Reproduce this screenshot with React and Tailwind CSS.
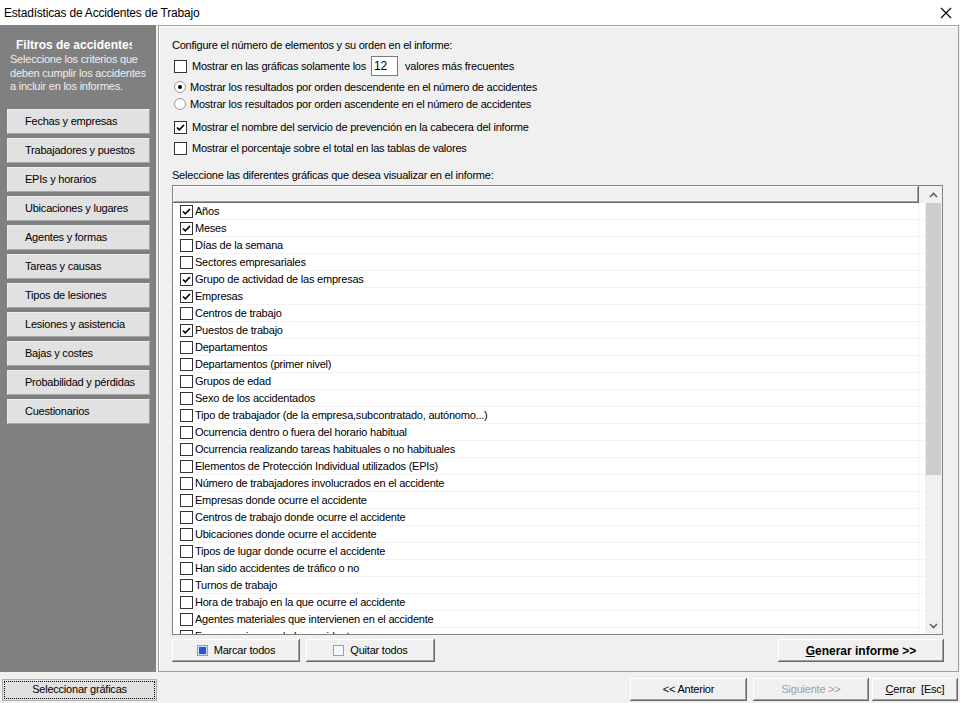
import React from "react";

const filtros = [
  "Fechas y empresas",
  "Trabajadores y puestos",
  "EPIs y horarios",
  "Ubicaciones y lugares",
  "Agentes y formas",
  "Tareas y causas",
  "Tipos de lesiones",
  "Lesiones y asistencia",
  "Bajas y costes",
  "Probabilidad y pérdidas",
  "Cuestionarios",
];

const graficas = [
  ["Años", true],
  ["Meses", true],
  ["Días de la semana", false],
  ["Sectores empresariales", false],
  ["Grupo de actividad de las empresas", true],
  ["Empresas", true],
  ["Centros de trabajo", false],
  ["Puestos de trabajo", true],
  ["Departamentos", false],
  ["Departamentos (primer nivel)", false],
  ["Grupos de edad", false],
  ["Sexo de los accidentados", false],
  ["Tipo de trabajador (de la empresa,subcontratado, autónomo...)", false],
  ["Ocurrencia dentro o fuera del horario habitual", false],
  ["Ocurrencia realizando tareas habituales o no habituales", false],
  ["Elementos de Protección Individual utilizados (EPIs)", false],
  ["Número de trabajadores involucrados en el accidente", false],
  ["Empresas donde ocurre el accidente", false],
  ["Centros de trabajo donde ocurre el accidente", false],
  ["Ubicaciones donde ocurre el accidente", false],
  ["Tipos de lugar donde ocurre el accidente", false],
  ["Han sido accidentes de tráfico o no", false],
  ["Turnos de trabajo", false],
  ["Hora de trabajo en la que ocurre el accidente", false],
  ["Agentes materiales que intervienen en el accidente", false],
  ["Formas o riesgos de los accidentes", false],
];

function Check({ checked }) {
  return (
    <span className="w-[13px] h-[13px] shrink-0 border border-[#333] bg-white flex items-center justify-center">
      {checked && (
        <svg width="11" height="11" viewBox="0 0 11 11">
          <path d="M2 5.5 L4.3 7.8 L9 3" fill="none" stroke="#000" strokeWidth="1.7" />
        </svg>
      )}
    </span>
  );
}

function Radio({ checked }) {
  return (
    <span className="w-[12px] h-[12px] shrink-0 rounded-full border border-[#9a9a9a] bg-white flex items-center justify-center">
      {checked && <span className="w-[4px] h-[4px] rounded-full bg-black" />}
    </span>
  );
}

function Button3D({ className = "", children }) {
  return (
    <div
      className={
        "flex items-center justify-center bg-[#f0f0f0] shadow-[inset_-1px_-1px_#696969,inset_1px_1px_#ffffff,inset_-2px_-2px_#a0a0a0] " +
        className
      }
    >
      {children}
    </div>
  );
}

export default function App() {
  return (
    <div className="w-[960px] h-[703px] bg-[#f0f0f0] flex flex-col overflow-hidden font-['Liberation_Sans',Arial,sans-serif] text-[11px] tracking-[-0.22px] text-black">
      {/* title bar */}
      <div className="h-[25px] bg-white flex items-center justify-between pl-[4px] pr-[8px]">
        <span className="text-[12px] tracking-[-0.2px]">Estadísticas de Accidentes de Trabajo</span>
        <svg width="12" height="12" viewBox="0 0 12 12">
          <path d="M1 1 L11 11 M11 1 L1 11" stroke="#000" strokeWidth="1.1" />
        </svg>
      </div>

      {/* body */}
      <div className="h-[647px] flex">
        {/* left filter panel */}
        <div className="w-[156px] bg-[#808080] flex flex-col pt-[13px]">
          <div className="ml-[16px] w-[116px] overflow-hidden whitespace-nowrap text-white font-bold text-[12px] leading-[14px] tracking-[0px]">
            Filtros de accidentes
          </div>
          <div className="ml-[10px] mt-[1px] text-[#eeeeee] leading-[13.5px]">
            Seleccione los criterios que
            <br />
            deben cumplir los accidentes
            <br />
            a incluir en los informes.
          </div>
          <div className="mt-[15px] ml-[7px] w-[143px] flex flex-col gap-[4px]">
            {filtros.map((f) => (
              <div
                key={f}
                className="h-[25px] bg-[#e1e1e1] border-t border-l border-[#ececec] border-b border-r border-b-[#a5a5a5] border-r-[#a5a5a5] flex items-center pl-[17px]"
              >
                {f}
              </div>
            ))}
          </div>
        </div>

        {/* right panel */}
        <div className="ml-[2px] w-[801px] border border-[#a0a0a0] shadow-[inset_1px_1px_#ffffff] flex flex-col pl-[13px] pt-[12px]">
          <div className="h-[14px] flex items-center">Configure el número de elementos y su orden en el informe:</div>
          <div className="mt-[4px] h-[20px] flex items-center pl-[2px]">
            <Check />
            <span className="ml-[5px]">Mostrar en las gráficas solamente los</span>
            <span className="ml-[5px] w-[27px] h-[20px] bg-white border border-[#7a7a7a] flex items-center pl-[2px] text-[12px]">12</span>
            <span className="ml-[7px]">valores más frecuentes</span>
          </div>
          <div className="mt-[4px] h-[14px] flex items-center pl-[2px]">
            <Radio checked />
            <span className="ml-[4px]">Mostrar los resultados por orden descendente en el número de accidentes</span>
          </div>
          <div className="mt-[3px] h-[14px] flex items-center pl-[2px]">
            <Radio />
            <span className="ml-[4px]">Mostrar los resultados por orden ascendente en el número de accidentes</span>
          </div>
          <div className="mt-[9px] h-[14px] flex items-center pl-[2px]">
            <Check checked />
            <span className="ml-[5px]">Mostrar el nombre del servicio de prevención en la cabecera del informe</span>
          </div>
          <div className="mt-[7px] h-[14px] flex items-center pl-[2px]">
            <Check />
            <span className="ml-[5px]">Mostrar el porcentaje sobre el total en las tablas de valores</span>
          </div>
          <div className="mt-[13px] h-[14px] flex items-center">Seleccione las diferentes gráficas que desea visualizar en el informe:</div>

          {/* list */}
          <div className="mt-[3px] w-[771px] h-[450px] border border-[#828282] bg-white flex overflow-hidden">
            <div className="flex-1 flex flex-col overflow-hidden">
              <div className="h-[17px] shrink-0 bg-[#f0f0f0] flex">
                <div className="w-[746px] h-full bg-[#f0f0f0] shadow-[inset_-1px_-1px_#696969,inset_1px_1px_#ffffff,inset_-2px_-2px_#a0a0a0]" />
              </div>
              {graficas.map(([label, checked]) => (
                <div key={label} className="h-[17px] shrink-0 flex border-b border-[#f3f3f3]">
                  <div className="w-[746px] flex items-center pl-[7px] border-r border-[#f3f3f3] whitespace-nowrap">
                    <Check checked={checked} />
                    <span className="ml-[2px]">{label}</span>
                  </div>
                </div>
              ))}
            </div>
            {/* scrollbar */}
            <div className="w-[17px] bg-[#f0f0f0] flex flex-col">
              <div className="h-[17px] flex items-center justify-center">
                <svg width="9" height="6" viewBox="0 0 9 6">
                  <path d="M1 5 L4.5 1.5 L8 5" fill="none" stroke="#606060" strokeWidth="1.6" />
                </svg>
              </div>
              <div className="mx-[1px] h-[272px] bg-[#cdcdcd]" />
              <div className="flex-1" />
              <div className="h-[17px] flex items-center justify-center">
                <svg width="9" height="6" viewBox="0 0 9 6">
                  <path d="M1 1 L4.5 4.5 L8 1" fill="none" stroke="#606060" strokeWidth="1.6" />
                </svg>
              </div>
            </div>
          </div>

          <div className="mt-[4px] h-[23px] flex">
            <Button3D className="w-[128px] h-[23px] bg-[#e1e1e1] gap-[6px]">
              <span className="w-[11px] h-[11px] border border-[#6fa8e6] bg-[#cfe3f7] flex items-center justify-center">
                <span className="w-[7px] h-[7px] bg-[#2453e8]" />
              </span>
              <span>Marcar todos</span>
            </Button3D>
            <Button3D className="ml-[6px] w-[129px] h-[23px] bg-[#e1e1e1] gap-[6px]">
              <span className="w-[11px] h-[11px] border border-[#6fa8e6] bg-[#f4f9fe]" />
              <span>Quitar todos</span>
            </Button3D>
            <Button3D className="ml-[343px] w-[166px] h-[23px] font-bold text-[12px] tracking-[0px]">
              <span>
                <span className="underline">G</span>enerar informe &gt;&gt;
              </span>
            </Button3D>
          </div>
        </div>
      </div>

      {/* bottom bar */}
      <div className="flex-1 flex items-center pt-[4px]">
        <div className="ml-[2px] w-[155px] h-[22px] bg-[#e1e1e1] border border-[#adadad] p-[1px]">
          <div className="w-full h-full border border-dotted border-black flex items-center justify-center">
            Seleccionar gráficas
          </div>
        </div>
        <div className="flex-1" />
        <Button3D className="w-[117px] h-[23px]">&lt;&lt; Anterior</Button3D>
        <Button3D className="ml-[6px] w-[116px] h-[23px] text-[#a0a0a0]">Siguiente &gt;&gt;</Button3D>
        <Button3D className="ml-[3px] mr-[2px] w-[86px] h-[23px]">
          <span>
            <span className="underline">C</span>errar&nbsp;&nbsp;[Esc]
          </span>
        </Button3D>
      </div>
    </div>
  );
}
